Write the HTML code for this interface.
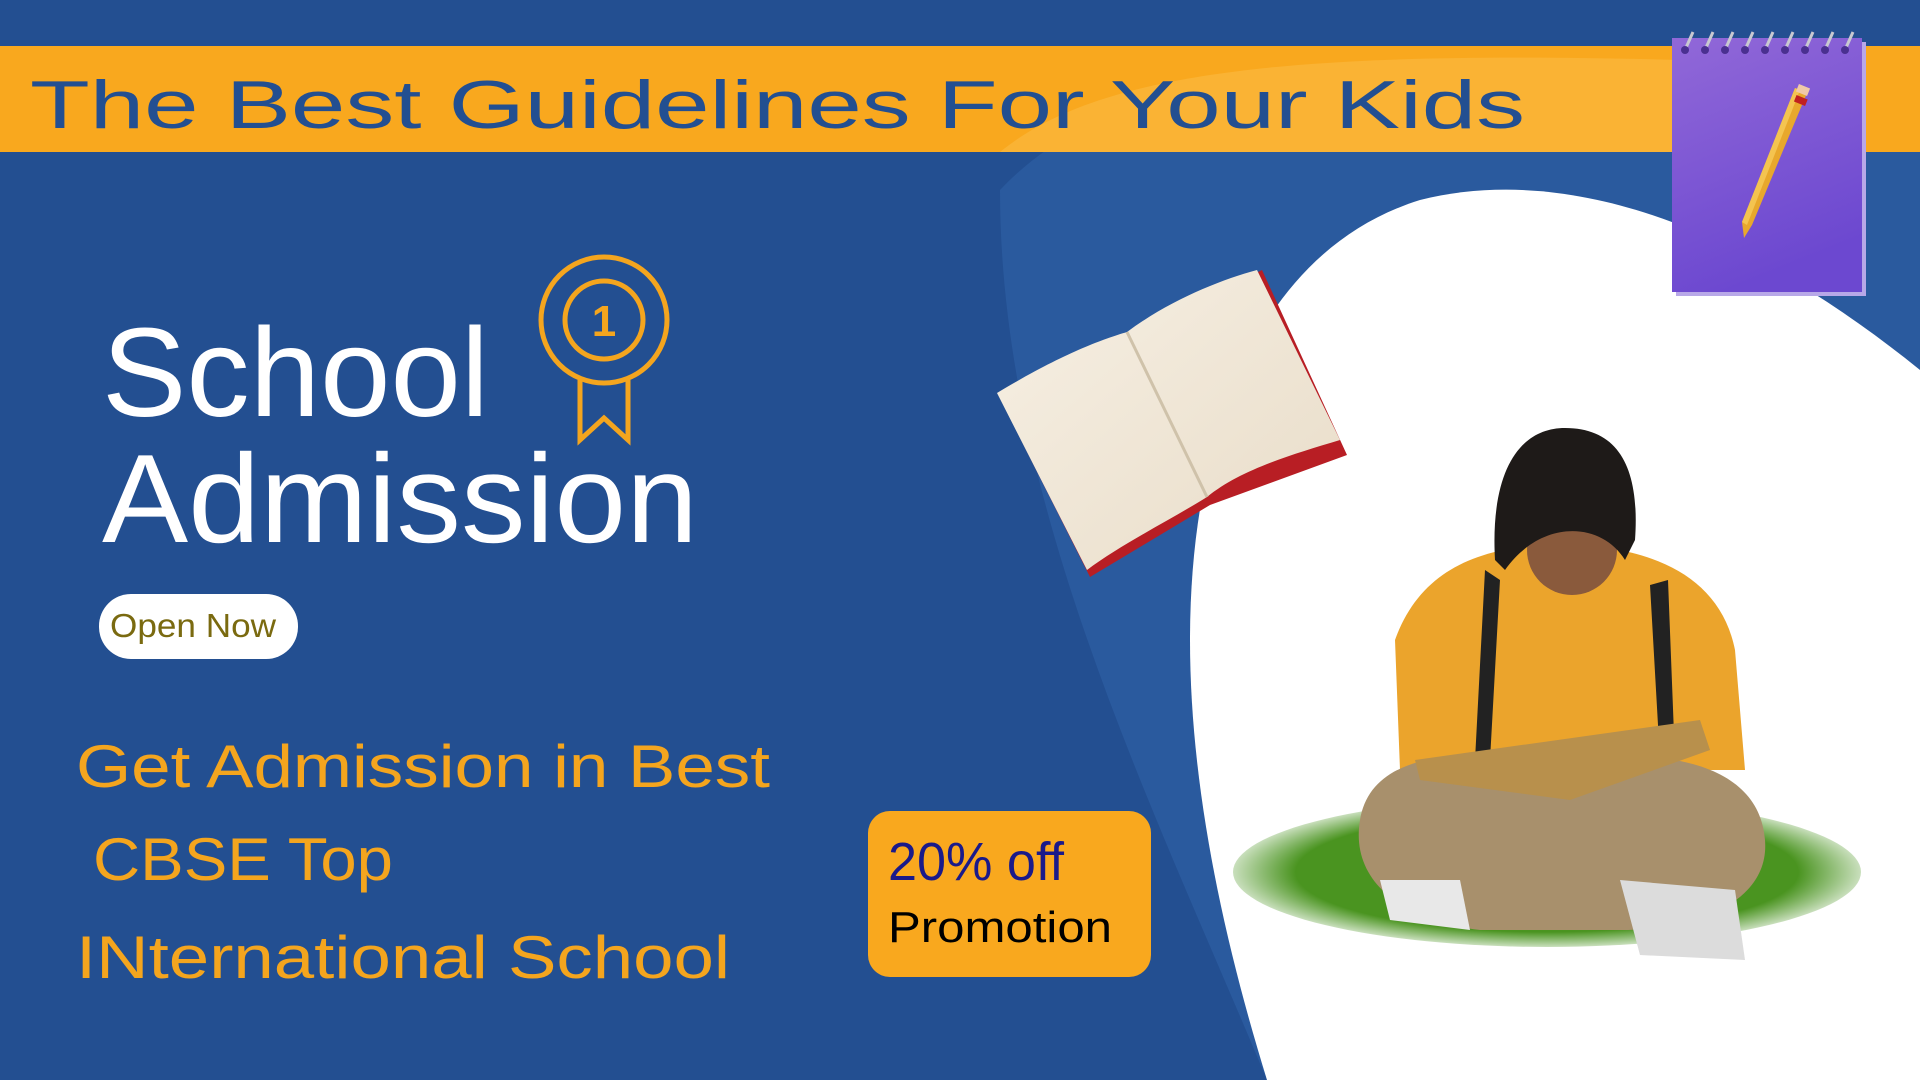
<!DOCTYPE html>
<html><head><meta charset="utf-8"><style>
html,body{margin:0;padding:0;width:1920px;height:1080px;overflow:hidden;background:#234f91}
svg{display:block}
text{font-family:"Liberation Sans",sans-serif}
</style></head><body>
<svg width="1920" height="1080" viewBox="0 0 1920 1080" xmlns="http://www.w3.org/2000/svg">
<defs>
<linearGradient id="nb" x1="0" y1="0" x2="0.3" y2="1"><stop offset="0" stop-color="#9168d8"/><stop offset="1" stop-color="#6c48d0"/></linearGradient>
<radialGradient id="gr" cx="0.5" cy="0.5" r="0.5"><stop offset="0.8" stop-color="#4a9420"/><stop offset="1" stop-color="#4a9420" stop-opacity="0.3"/></radialGradient>
<linearGradient id="pg" x1="0" y1="0" x2="1" y2="1"><stop offset="0" stop-color="#f7f0e4"/><stop offset="1" stop-color="#e8dcc8"/></linearGradient>
</defs>
<rect width="1920" height="1080" fill="#234f91"/>
<!-- lighter arc region -->
<path d="M1000 190 C1150 30 1500 40 1920 70 L1920 1080 L1267 1080 C1150 800 1000 500 1000 190 Z" fill="#2a5a9e"/>
<!-- orange band -->
<rect x="0" y="46" width="1920" height="106" fill="#f9a81e"/>
<path d="M1000 152 C1100 70 1300 50 1680 60 L1680 152 Z" fill="#fab334"/>
<text x="30" y="128" font-size="68" fill="#234f91" textLength="1495" lengthAdjust="spacingAndGlyphs">The Best Guidelines For Your Kids</text>
<!-- white blob -->
<path d="M1267 1080 C1230 960 1190 800 1190 640 C1190 430 1260 250 1420 200 C1580 160 1760 240 1920 370 L1920 1080 Z" fill="#ffffff"/>
<!-- notebook -->
<rect x="1676" y="42" width="190" height="254" fill="#b8a8e8"/>
<rect x="1672" y="38" width="190" height="254" fill="url(#nb)"/>
<g stroke="#c8c8d0" stroke-width="3" fill="none">
<path d="M1685 50 l8 -18"/><path d="M1705 50 l8 -18"/><path d="M1725 50 l8 -18"/><path d="M1745 50 l8 -18"/><path d="M1765 50 l8 -18"/><path d="M1785 50 l8 -18"/><path d="M1805 50 l8 -18"/><path d="M1825 50 l8 -18"/><path d="M1845 50 l8 -18"/>
</g>
<g fill="#4a3090"><circle cx="1685" cy="50" r="4"/><circle cx="1705" cy="50" r="4"/><circle cx="1725" cy="50" r="4"/><circle cx="1745" cy="50" r="4"/><circle cx="1765" cy="50" r="4"/><circle cx="1785" cy="50" r="4"/><circle cx="1805" cy="50" r="4"/><circle cx="1825" cy="50" r="4"/><circle cx="1845" cy="50" r="4"/></g>
<path d="M1795 88 L1807 93 L1752 225 L1744 238 L1742 222 Z" fill="#e8a82c"/>
<path d="M1795 88 L1800 90 L1747 225 L1742 222 Z" fill="#f4c450"/>
<rect x="1795" y="97" width="12" height="7" fill="#c02020" transform="rotate(22 1801 100)"/>
<rect x="1797" y="86" width="12" height="8" fill="#f0c8a8" transform="rotate(22 1803 90)"/>
<!-- book -->
<path d="M1000 398 L1090 577 L1210 505 L1347 455 L1262 270 L1130 336 Z" fill="#b81e24"/>
<path d="M997 393 C1060 355 1100 340 1127 332 C1170 300 1220 280 1257 270 L1340 440 C1290 455 1240 470 1207 497 C1170 520 1120 545 1087 570 Z" fill="url(#pg)"/>
<path d="M1127 332 L1207 497" stroke="#cfc2aa" stroke-width="3"/>
<!-- medal -->
<g fill="none" stroke="#f4a51e" stroke-width="5">
<circle cx="604" cy="320" r="63"/>
<circle cx="604" cy="320" r="39"/>
<path d="M580 380 L580 440 L604 418 L628 440 L628 380"/>
</g>
<text x="604" y="336" font-size="44" font-weight="bold" fill="#f4a51e" text-anchor="middle">1</text>
<!-- headings -->
<text x="102" y="416" font-size="126" fill="#ffffff" textLength="387" lengthAdjust="spacingAndGlyphs">School</text>
<text x="102" y="542" font-size="126" fill="#ffffff" textLength="596" lengthAdjust="spacingAndGlyphs">Admission</text>
<rect x="99" y="594" width="199" height="65" rx="32" fill="#ffffff"/>
<text x="110" y="637" font-size="33" fill="#7a6a10" textLength="166" lengthAdjust="spacingAndGlyphs">Open Now</text>
<g fill="#f4a51e" font-size="60">
<text x="76" y="787" textLength="694" lengthAdjust="spacingAndGlyphs">Get Admission in Best</text>
<text x="93" y="880" textLength="300" lengthAdjust="spacingAndGlyphs">CBSE Top</text>
<text x="76" y="978" textLength="654" lengthAdjust="spacingAndGlyphs">INternational School</text>
</g>
<!-- promo -->
<rect x="868" y="811" width="283" height="166" rx="22" fill="#f9a81e"/>
<text x="888" y="880" font-size="54" fill="#1a1a8a" textLength="176" lengthAdjust="spacingAndGlyphs">20% off</text>
<text x="888" y="942" font-size="44" fill="#000" textLength="224" lengthAdjust="spacingAndGlyphs">Promotion</text>
<!-- boy -->
<ellipse cx="1547" cy="872" rx="314" ry="75" fill="url(#gr)"/>
<path d="M1395 640 C1420 570 1480 545 1560 545 C1650 545 1720 575 1735 650 L1745 770 L1400 770 Z" fill="#eba42c"/>
<path d="M1485 570 L1475 760 L1490 760 L1500 580 Z M1650 585 L1660 760 L1675 760 L1668 580 Z" fill="#222"/>
<path d="M1360 820 C1370 760 1440 745 1560 760 C1680 745 1760 770 1765 840 C1770 900 1700 930 1620 930 L1480 930 C1400 920 1350 880 1360 820 Z" fill="#a8906c"/>
<path d="M1415 760 L1700 720 L1710 750 L1570 800 L1420 780 Z" fill="#b8904c"/>
<path d="M1380 880 L1460 880 L1470 930 L1390 920 Z" fill="#e8e8e8"/>
<path d="M1620 880 L1735 890 L1745 960 L1640 955 Z" fill="#dcdcdc"/>
<ellipse cx="1572" cy="550" rx="45" ry="45" fill="#8a5a3c"/>
<path d="M1495 560 C1490 470 1520 428 1565 428 C1620 428 1640 470 1635 540 L1625 560 C1600 520 1540 520 1505 570 Z" fill="#1e1a18"/>
</svg>
</body></html>
